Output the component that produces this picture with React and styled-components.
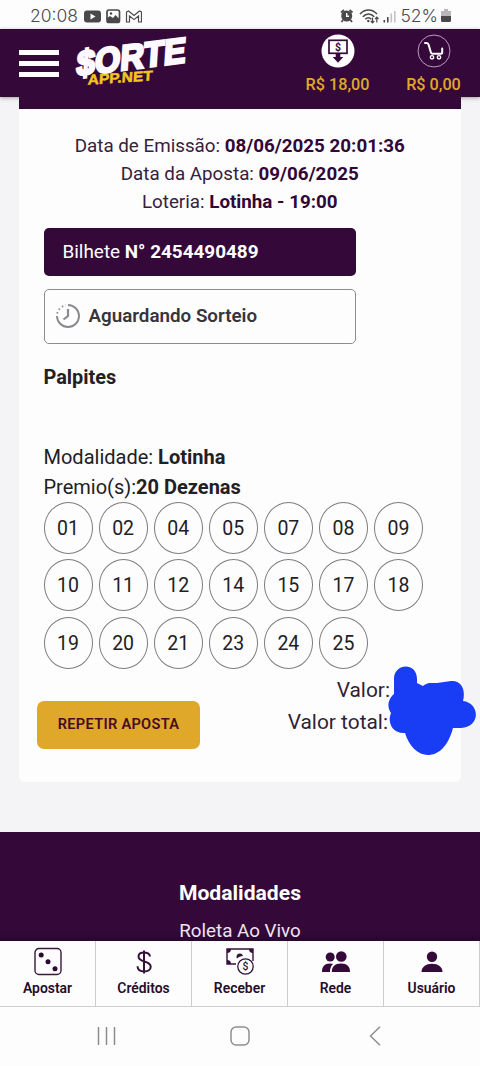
import React from 'react'
import styled, { createGlobalStyle } from 'styled-components'

const purple = '#340939'
const gold = '#e0a82b'

const numbers = [
  '01', '02', '04', '05', '07', '08', '09',
  '10', '11', '12', '14', '15', '17', '18',
  '19', '20', '21', '23', '24', '25',
]

const GlobalStyle = createGlobalStyle`
  * {
    box-sizing: border-box;
  }
  body {
    margin: 0;
    font-family: Roboto, "Liberation Sans", sans-serif;
    color: #212024;
  }
  svg {
    display: block;
    flex: none;
  }
`

const Screen = styled.div`
  width: 480px;
  height: 1066px;
  display: flex;
  flex-direction: column;
  overflow: hidden;
  background: #f4f3f5;
`

const StatusBar = styled.div`
  height: 29px;
  flex: none;
  display: flex;
  align-items: center;
  justify-content: space-between;
  padding: 3px 29px 0 30px;
  background: #fefdfe;
  color: #4a484b;
`

const StatusGroup = styled.div`
  display: flex;
  align-items: center;
  gap: ${({ $gap }) => $gap}px;
`

const StatusText = styled.span`
  font-family: Inter, Roboto, sans-serif;
  font-size: 17.5px;
  font-weight: 300;
  line-height: 24px;
`

const Header = styled.header`
  height: 68px;
  flex: none;
  display: flex;
  align-items: flex-start;
  background: ${purple};
  box-shadow: 0 1px 4px rgba(0, 0, 0, 0.35);
`

const MenuButton = styled.button`
  width: 40px;
  flex: none;
  margin: 21px 0 0 19px;
  padding: 0;
  border: 0;
  background: none;
  display: flex;
  flex-direction: column;
  gap: 6.5px;
  span {
    height: 4.7px;
    background: #fff;
  }
`

const Logo = styled.svg`
  margin: 5px 0 0 13px;
  overflow: visible;
`

const Balances = styled.div`
  flex: none;
  display: flex;
  gap: 5px;
  margin-left: 98px;
`

const HeaderItem = styled.div`
  width: 91px;
  padding-top: 5px;
  display: flex;
  flex-direction: column;
  align-items: center;
  color: ${gold};
  font-size: 16.2px;
  font-weight: 500;
  line-height: 22px;
  span {
    margin-top: 6px;
    white-space: nowrap;
  }
`

const Main = styled.main`
  flex: 1;
  min-height: 0;
  overflow: hidden;
`

const Card = styled.section`
  height: 685px;
  margin: 0 19px 50px 18.5px;
  border-top: 12px solid ${purple};
  border-radius: 0 0 5px 5px;
  background: #fefdfe;
  padding: 23px 25px 0;
  position: relative;
`

const Info = styled.div`
  text-align: center;
  font-size: 18.8px;
  line-height: 28px;
  white-space: nowrap;
  color: #36203c;
  b {
    color: #300736;
  }
`

const Ticket = styled.div`
  width: 312.5px;
  height: 48px;
  margin-top: 12px;
  padding-left: 19px;
  border-radius: 5px;
  background: ${purple};
  color: #fff;
  font-size: 18.9px;
  line-height: 48px;
`

const Status = styled.div`
  width: 312.5px;
  height: 55px;
  margin-top: 13px;
  padding: 0 0 1px 10px;
  display: flex;
  align-items: center;
  gap: 8px;
  border: 1.4px solid #8d8b90;
  border-radius: 5px;
  color: #37343a;
  font-size: 18.8px;
  font-weight: 600;
`

const Title = styled.h2`
  margin: 19px 0 49px;
  font-size: 19.9px;
  font-weight: 700;
  line-height: 30px;
`

const Line = styled.div`
  font-size: 20px;
  line-height: 30px;
  white-space: nowrap;
`

const Numbers = styled.div`
  display: grid;
  grid-template-columns: repeat(7, 49px);
  grid-auto-rows: 51.6px;
  gap: 5.9px 6.1px;
`

const Ball = styled.div`
  display: flex;
  align-items: center;
  justify-content: center;
  padding-top: 1px;
  border: 1px solid #7d7b80;
  border-radius: 50%;
  font-size: 19.5px;
`

const Bottom = styled.div`
  display: flex;
  align-items: flex-start;
  justify-content: space-between;
  margin: 5px 46px 0 -6.5px;
`

const RepeatButton = styled.button`
  width: 163px;
  height: 48px;
  margin-top: 27px;
  padding: 0 0 2px;
  border: 0;
  border-radius: 7px;
  background: ${gold};
  color: #470b25;
  font-family: inherit;
  font-size: 14.6px;
  font-weight: 600;
  letter-spacing: 0.3px;
`

const Values = styled.div`
  text-align: right;
  font-size: 20.9px;
  line-height: 32px;
  color: #321f37;
  p {
    margin: 0;
  }
  p:last-child {
    padding-right: 2px;
  }
`

const Scribble = styled.svg`
  position: absolute;
  left: 368.5px;
  top: 554.5px;
`

const Footer = styled.footer`
  height: 109px;
  padding-top: 46px;
  background: linear-gradient(${purple} 90%, #2a0630);
  color: #efe3f1;
  text-align: center;
  font-size: 18.8px;
  line-height: 30px;
  h3 {
    margin: 0 0 8px;
    color: #fff;
    font-size: 21.1px;
    line-height: 30px;
  }
`

const TabBar = styled.nav`
  height: 66px;
  flex: none;
  display: grid;
  grid-template-columns: repeat(5, 1fr);
  background: #fefdfe;
  border-bottom: 1px solid #cfcbd0;
`

const Tab = styled.a`
  display: flex;
  flex-direction: column;
  align-items: center;
  padding-top: 6px;
  border-right: 1px solid #cfcbd0;
  color: #260d2b;
  font-size: 13.9px;
  font-weight: 600;
  line-height: 20px;
  span {
    margin-top: 1px;
  }
`

const SystemBar = styled.div`
  height: 59px;
  flex: none;
  display: flex;
  align-items: center;
  background: #fefdfe;
  padding: 0 0 2px 96px;
`

const SystemIcon = styled.svg`
  margin-right: ${({ $right }) => $right || 0}px;
`

function NotificationIcons() {
  return (
    <svg width="58" height="15" viewBox="0 0 58 15">
      <rect x="0" y="1.5" width="17" height="12" rx="3" fill="#4a484b" />
      <path d="M6.5 4.5v6l5-3z" fill="#fff" />
      <rect x="23" y="1" width="12.5" height="12.5" rx="2" fill="none" stroke="#4a484b" strokeWidth="1.7" />
      <path d="M23 12V9l3-2 3 2 2.5-3 4 4v3H24z" fill="#4a484b" />
      <circle cx="27" cy="4.5" r="1.2" fill="#4a484b" />
      <path d="M42.5 13V3l2-1 5.5 4.5L55.5 2l2 1v10h-3V7L50 10.6 45.5 7v6z" fill="none" stroke="#4a484b" strokeWidth="1.2" />
    </svg>
  )
}

function SignalIcons() {
  return (
    <svg width="57" height="16" viewBox="0 0 57 16">
      <g fill="none" stroke="#4a484b" strokeWidth="1.4">
        <circle cx="6.7" cy="8" r="4.8" fill="#4a484b" />
        <path d="M1 4.5 4 2M12.5 4.5l-3-2.500M3 12l-1.500 2M10.500 12l1.500 2" strokeWidth="1.8" />
        <path d="M6.700 5v3.300H9" stroke="#fff" />
        <path d="M20 6c5-5.300 12-5.300 17 0M22.800 8.700c3.500-3.700 8-3.700 11.500 0M25.300 11.300c2-2 4.200-2 6 0" strokeWidth="1.6" />
        <path d="M32.500 9.500v5M30.800 13l1.700 1.800 1.700-1.800M36.800 14.500v-5M35.100 11l1.700-1.800 1.700 1.800" strokeWidth="1.2" />
      </g>
      <circle cx="28.3" cy="13" r="1.2" fill="#4a484b" />
      <path d="M43.500 12h1.600v2.500h-1.600zM47 9h1.600v5.500H47z" fill="#4a484b" />
      <path d="M50.500 5.500h1.600v9h-1.600zM54 3h1.600v11.500H54z" fill="#c3c1c4" />
    </svg>
  )
}

function BatteryIcon() {
  return (
    <svg width="10" height="14" viewBox="0 0 10 14">
      <path d="M3 0h4v2h3v5H0V2h3z" fill="#b9b7ba" />
      <path d="M0 7h10v4.500q0 1.500-1.500 1.500h-7Q0 13 0 11.500z" fill="#4a484b" />
    </svg>
  )
}

function SorteLogo() {
  return (
    <Logo width="122" height="54" viewBox="72 34 122 54">
      <g fontFamily="Liberation Sans, sans-serif" fontWeight="700" strokeLinejoin="miter">
        <text
          transform="translate(76 76) rotate(-7.2) skewX(-11)"
          fontSize="35"
          textLength="110"
          lengthAdjust="spacingAndGlyphs"
          fill="#fdf9ff"
          stroke="#fdf9ff"
          strokeWidth="2.6"
        >
          $ORTE
        </text>
        <text
          transform="translate(87.5 84.8) rotate(-4) skewX(-7)"
          fontSize="14"
          textLength="65"
          lengthAdjust="spacingAndGlyphs"
          fill="#f3c51d"
          stroke="#f3c51d"
          strokeWidth="0.5"
        >
          APP.NET
        </text>
      </g>
    </Logo>
  )
}

function DepositIcon() {
  return (
    <svg width="34" height="34" viewBox="0 0 34 34">
      <circle cx="17" cy="17" r="16.5" fill="#fff" />
      <rect x="8" y="6.3" width="18" height="13" fill="none" stroke={purple} strokeWidth="1.7" />
      <path d="M14.700 19h4.600v4h3L17 28.700 11.700 23h3z" fill={purple} />
      <text x="17" y="16.5" textAnchor="middle" fontSize="10.5" fontWeight="700" fill={purple}>$</text>
    </svg>
  )
}

function CartIcon() {
  return (
    <svg width="34" height="34" viewBox="0 0 34 34" fill="none" stroke="#fff">
      <circle cx="17" cy="17" r="16" stroke="#b99dbd" strokeWidth="1" />
      <path d="M8 9h1.700c1.300 0 1.700 1 2 2l2.200 7.500c.3 1 .8 1.300 1.800 1.300h7.800c1.200 0 1.700-.5 1.700-1.400v-3.900" strokeWidth="2" strokeLinecap="round" />
      <circle cx="15" cy="23.3" r="1.7" strokeWidth="1.4" />
      <circle cx="22" cy="23.3" r="1.7" strokeWidth="1.4" />
    </svg>
  )
}

function ClockIcon() {
  return (
    <svg width="26" height="26" viewBox="0 0 26 26" fill="none" stroke="#8b898e">
      <path d="M13 2a11 11 0 1 1-11 11" strokeWidth="1.9" />
      <path d="M2.200 10.500A11 11 0 0 1 11 2.200" strokeWidth="1.9" strokeDasharray="1.5 2.6" />
      <path d="M13 6v7l-4.500 3.500" strokeWidth="2.2" />
    </svg>
  )
}

function DiceIcon() {
  return (
    <svg width="30" height="30" viewBox="0 0 30 30">
      <rect x="2" y="1.500" width="26" height="26" rx="4" fill="none" stroke="#39183f" strokeWidth="1.4" />
      <g fill="#2b0931">
        <circle cx="8.2" cy="8" r="2.5" />
        <circle cx="15" cy="14.700" r="2.5" />
        <circle cx="22" cy="21.700" r="2.5" />
      </g>
    </svg>
  )
}

function DollarIcon() {
  return (
    <svg width="30" height="30" viewBox="0 0 30 30" fill="none" stroke="#35103b" strokeWidth="2">
      <path d="M15 3.500v23M21 9.500c-.3-2.600-2.600-4-6-4-3.300 0-5.500 1.500-5.500 4.200 0 6.200 12.200 3.200 12.200 10 0 3-2.700 4.800-6.400 4.800-4.200 0-6.600-1.900-6.800-5.300" />
    </svg>
  )
}

function ReceiveIcon() {
  return (
    <svg width="30" height="30" viewBox="0 0 30 30">
      <path d="M11 17H2V2h26v12" fill="none" stroke="#35103b" strokeWidth="1.4" />
      <path d="M2 2h4a4 4 0 0 1-4 4zM28 2h-4a4 4 0 0 0 4 4zM2 17h4a4 4 0 0 0-4-4zM12 11.500a3.300 3.300 0 1 1 6-2.500c-2.500 0-4.500 1-6 2.500z" fill="#35103b" />
      <circle cx="20.5" cy="19.5" r="7.7" fill="#fff" stroke="#35103b" strokeWidth="1.3" />
      <text x="20.5" y="23.3" textAnchor="middle" fontSize="10.5" fontWeight="500" fill="#35103b">$</text>
    </svg>
  )
}

function NetworkIcon() {
  return (
    <svg width="30" height="30" viewBox="0 0 30 30" fill="#350939">
      <circle cx="9.2" cy="10" r="4.5" />
      <path d="M1 25c0-5.500 2.500-8.500 8-8.500 1.300 0 2.200.2 3.100.5-2.200 2-3.100 4.500-3.100 8z" />
      <circle cx="20.3" cy="9.500" r="5.3" />
      <path d="M10.800 25c0-5.500 3-8.500 9.200-8.500s9 3 9 8.500z" />
    </svg>
  )
}

function UserIcon() {
  return (
    <svg width="30" height="30" viewBox="0 0 30 30" fill="#350939">
      <circle cx="15" cy="9.700" r="5.2" />
      <path d="M4.500 25c0-5.200 4.500-8.300 10.500-8.300s10.500 3.100 10.500 8.300z" />
    </svg>
  )
}

const tabs = [
  { label: 'Apostar', Icon: DiceIcon },
  { label: 'Créditos', Icon: DollarIcon },
  { label: 'Receber', Icon: ReceiveIcon },
  { label: 'Rede', Icon: NetworkIcon },
  { label: 'Usuário', Icon: UserIcon },
]

function App() {
  return (
    <Screen>
      <GlobalStyle />
      <StatusBar>
        <StatusGroup $gap={6}>
          <StatusText>20:08</StatusText>
          <NotificationIcons />
        </StatusGroup>
        <StatusGroup $gap={3}>
          <SignalIcons />
          <StatusText>52%</StatusText>
          <BatteryIcon />
        </StatusGroup>
      </StatusBar>

      <Header>
        <MenuButton>
          <span />
          <span />
          <span />
        </MenuButton>
        <SorteLogo />
        <Balances>
          <HeaderItem>
            <DepositIcon />
            <span>R$ 18,00</span>
          </HeaderItem>
          <HeaderItem>
            <CartIcon />
            <span>R$ 0,00</span>
          </HeaderItem>
        </Balances>
      </Header>

      <Main>
        <Card>
          <Info>Data de Emissão: <b>08/06/2025 20:01:36</b></Info>
          <Info>Data da Aposta: <b>09/06/2025</b></Info>
          <Info>Loteria: <b>Lotinha - 19:00</b></Info>
          <Ticket>Bilhete <b>N° 2454490489</b></Ticket>
          <Status>
            <ClockIcon />
            Aguardando Sorteio
          </Status>
          <Title>Palpites</Title>
          <Line>Modalidade: <b>Lotinha</b></Line>
          <Line>Premio(s):<b>20 Dezenas</b></Line>
          <Numbers>
            {numbers.map((n) => (
              <Ball key={n}>{n}</Ball>
            ))}
          </Numbers>
          <Bottom>
            <RepeatButton>REPETIR APOSTA</RepeatButton>
            <Values>
              <p>Valor:</p>
              <p>Valor total:</p>
            </Values>
          </Bottom>
          <Scribble width="92" height="92" viewBox="387 664 92 92">
            <path
              d="M394 684v-5c0-16 23-17 23 0v4l6 3c4-4 9-3 14-3l14-2c10-1 15 8 12 20 17 2 18 26-2 27h-8c-5 19-15 27-25 27-10 0-19-9-23-22-13 1-18-11-14-20-5-7-2-15 3-19z"
              fill="#193df5"
            />
          </Scribble>
        </Card>
        <Footer>
          <h3>Modalidades</h3>
          <div>Roleta Ao Vivo</div>
        </Footer>
      </Main>

      <TabBar>
        {tabs.map(({ label, Icon }) => (
          <Tab key={label}>
            <Icon />
            <span>{label}</span>
          </Tab>
        ))}
      </TabBar>

      <SystemBar>
        <SystemIcon $right={112} width="21" height="20" viewBox="0 0 21 20" fill="none" stroke="#8f8d90" strokeWidth="1.5">
          <path d="M2.500 1v18M10.500 1v18M18.500 1v18" />
        </SystemIcon>
        <SystemIcon $right={117} width="22" height="20" viewBox="0 0 22 20" fill="none" stroke="#8f8d90" strokeWidth="1.5">
          <rect x="2" y="1" width="18" height="18" rx="5" />
        </SystemIcon>
        <SystemIcon width="14" height="20" viewBox="0 0 14 20" fill="none" stroke="#8f8d90" strokeWidth="1.5">
          <path d="M12 .8 2.500 10l9.500 9.200" />
        </SystemIcon>
      </SystemBar>
    </Screen>
  )
}

export default App
